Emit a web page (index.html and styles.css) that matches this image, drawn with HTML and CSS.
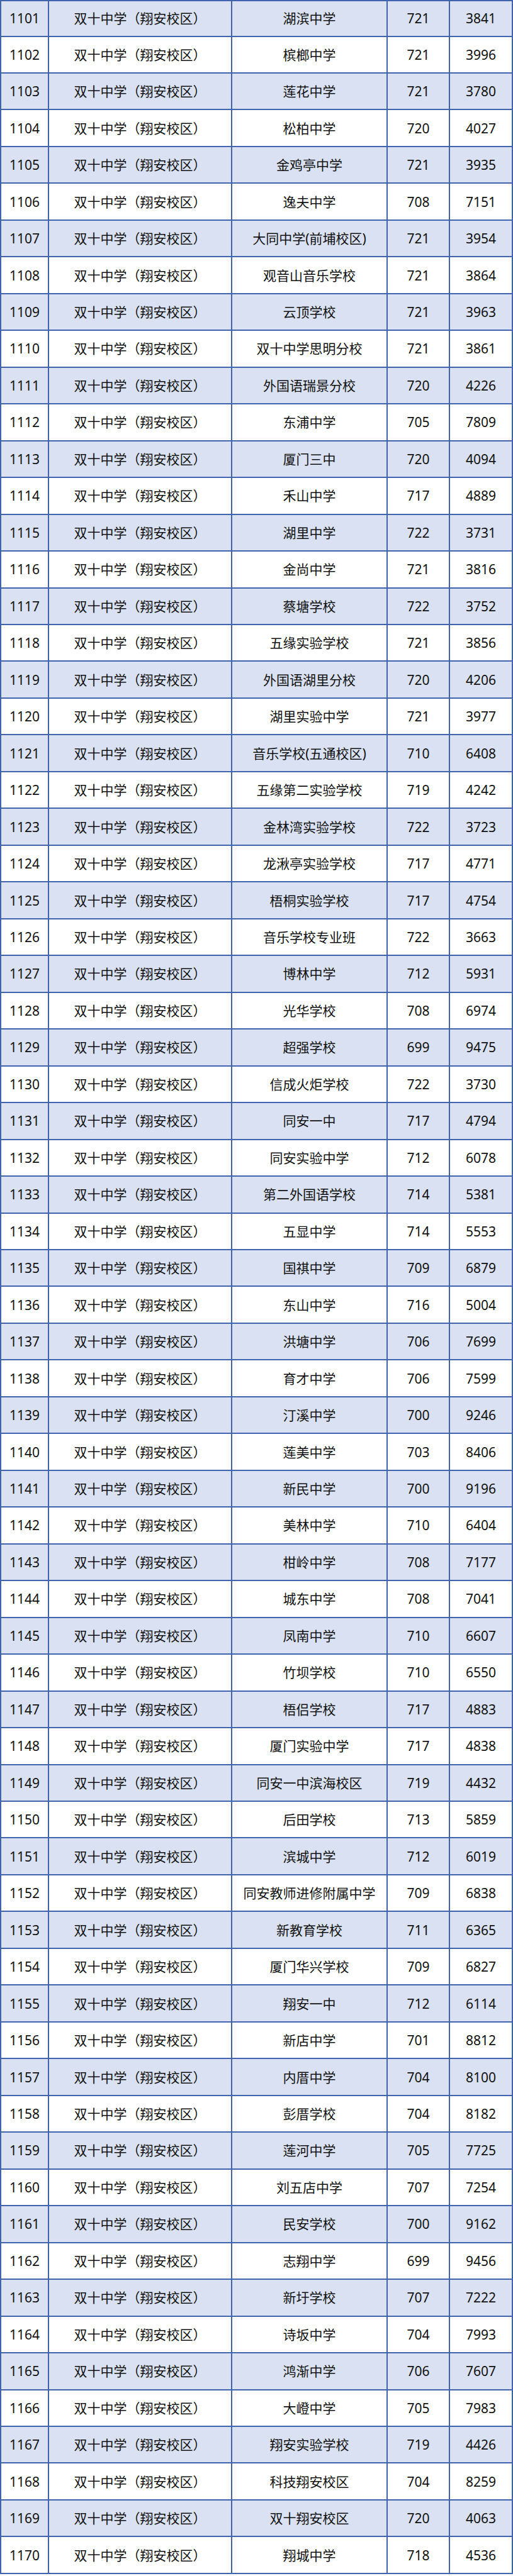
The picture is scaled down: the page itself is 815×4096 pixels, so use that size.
FILE: index.html
```html
<!DOCTYPE html>
<html lang="zh-CN">
<head>
<meta charset="utf-8">
<title>双十中学（翔安校区）</title>
<link rel="stylesheet" href="styles.css">
</head>
<body>
<div class="sheet">
<div class="row alt"><div class="c">1101</div><div class="c">双十中学（翔安校区）</div><div class="c">湖滨中学</div><div class="c">721</div><div class="c">3841</div></div>
<div class="row"><div class="c">1102</div><div class="c">双十中学（翔安校区）</div><div class="c">槟榔中学</div><div class="c">721</div><div class="c">3996</div></div>
<div class="row alt"><div class="c">1103</div><div class="c">双十中学（翔安校区）</div><div class="c">莲花中学</div><div class="c">721</div><div class="c">3780</div></div>
<div class="row"><div class="c">1104</div><div class="c">双十中学（翔安校区）</div><div class="c">松柏中学</div><div class="c">720</div><div class="c">4027</div></div>
<div class="row alt"><div class="c">1105</div><div class="c">双十中学（翔安校区）</div><div class="c">金鸡亭中学</div><div class="c">721</div><div class="c">3935</div></div>
<div class="row"><div class="c">1106</div><div class="c">双十中学（翔安校区）</div><div class="c">逸夫中学</div><div class="c">708</div><div class="c">7151</div></div>
<div class="row alt"><div class="c">1107</div><div class="c">双十中学（翔安校区）</div><div class="c">大同中学(前埔校区)</div><div class="c">721</div><div class="c">3954</div></div>
<div class="row"><div class="c">1108</div><div class="c">双十中学（翔安校区）</div><div class="c">观音山音乐学校</div><div class="c">721</div><div class="c">3864</div></div>
<div class="row alt"><div class="c">1109</div><div class="c">双十中学（翔安校区）</div><div class="c">云顶学校</div><div class="c">721</div><div class="c">3963</div></div>
<div class="row"><div class="c">1110</div><div class="c">双十中学（翔安校区）</div><div class="c">双十中学思明分校</div><div class="c">721</div><div class="c">3861</div></div>
<div class="row alt"><div class="c">1111</div><div class="c">双十中学（翔安校区）</div><div class="c">外国语瑞景分校</div><div class="c">720</div><div class="c">4226</div></div>
<div class="row"><div class="c">1112</div><div class="c">双十中学（翔安校区）</div><div class="c">东浦中学</div><div class="c">705</div><div class="c">7809</div></div>
<div class="row alt"><div class="c">1113</div><div class="c">双十中学（翔安校区）</div><div class="c">厦门三中</div><div class="c">720</div><div class="c">4094</div></div>
<div class="row"><div class="c">1114</div><div class="c">双十中学（翔安校区）</div><div class="c">禾山中学</div><div class="c">717</div><div class="c">4889</div></div>
<div class="row alt"><div class="c">1115</div><div class="c">双十中学（翔安校区）</div><div class="c">湖里中学</div><div class="c">722</div><div class="c">3731</div></div>
<div class="row"><div class="c">1116</div><div class="c">双十中学（翔安校区）</div><div class="c">金尚中学</div><div class="c">721</div><div class="c">3816</div></div>
<div class="row alt"><div class="c">1117</div><div class="c">双十中学（翔安校区）</div><div class="c">蔡塘学校</div><div class="c">722</div><div class="c">3752</div></div>
<div class="row"><div class="c">1118</div><div class="c">双十中学（翔安校区）</div><div class="c">五缘实验学校</div><div class="c">721</div><div class="c">3856</div></div>
<div class="row alt"><div class="c">1119</div><div class="c">双十中学（翔安校区）</div><div class="c">外国语湖里分校</div><div class="c">720</div><div class="c">4206</div></div>
<div class="row"><div class="c">1120</div><div class="c">双十中学（翔安校区）</div><div class="c">湖里实验中学</div><div class="c">721</div><div class="c">3977</div></div>
<div class="row alt"><div class="c">1121</div><div class="c">双十中学（翔安校区）</div><div class="c">音乐学校(五通校区)</div><div class="c">710</div><div class="c">6408</div></div>
<div class="row"><div class="c">1122</div><div class="c">双十中学（翔安校区）</div><div class="c">五缘第二实验学校</div><div class="c">719</div><div class="c">4242</div></div>
<div class="row alt"><div class="c">1123</div><div class="c">双十中学（翔安校区）</div><div class="c">金林湾实验学校</div><div class="c">722</div><div class="c">3723</div></div>
<div class="row"><div class="c">1124</div><div class="c">双十中学（翔安校区）</div><div class="c">龙湫亭实验学校</div><div class="c">717</div><div class="c">4771</div></div>
<div class="row alt"><div class="c">1125</div><div class="c">双十中学（翔安校区）</div><div class="c">梧桐实验学校</div><div class="c">717</div><div class="c">4754</div></div>
<div class="row"><div class="c">1126</div><div class="c">双十中学（翔安校区）</div><div class="c">音乐学校专业班</div><div class="c">722</div><div class="c">3663</div></div>
<div class="row alt"><div class="c">1127</div><div class="c">双十中学（翔安校区）</div><div class="c">博林中学</div><div class="c">712</div><div class="c">5931</div></div>
<div class="row"><div class="c">1128</div><div class="c">双十中学（翔安校区）</div><div class="c">光华学校</div><div class="c">708</div><div class="c">6974</div></div>
<div class="row alt"><div class="c">1129</div><div class="c">双十中学（翔安校区）</div><div class="c">超强学校</div><div class="c">699</div><div class="c">9475</div></div>
<div class="row"><div class="c">1130</div><div class="c">双十中学（翔安校区）</div><div class="c">信成火炬学校</div><div class="c">722</div><div class="c">3730</div></div>
<div class="row alt"><div class="c">1131</div><div class="c">双十中学（翔安校区）</div><div class="c">同安一中</div><div class="c">717</div><div class="c">4794</div></div>
<div class="row"><div class="c">1132</div><div class="c">双十中学（翔安校区）</div><div class="c">同安实验中学</div><div class="c">712</div><div class="c">6078</div></div>
<div class="row alt"><div class="c">1133</div><div class="c">双十中学（翔安校区）</div><div class="c">第二外国语学校</div><div class="c">714</div><div class="c">5381</div></div>
<div class="row"><div class="c">1134</div><div class="c">双十中学（翔安校区）</div><div class="c">五显中学</div><div class="c">714</div><div class="c">5553</div></div>
<div class="row alt"><div class="c">1135</div><div class="c">双十中学（翔安校区）</div><div class="c">国祺中学</div><div class="c">709</div><div class="c">6879</div></div>
<div class="row"><div class="c">1136</div><div class="c">双十中学（翔安校区）</div><div class="c">东山中学</div><div class="c">716</div><div class="c">5004</div></div>
<div class="row alt"><div class="c">1137</div><div class="c">双十中学（翔安校区）</div><div class="c">洪塘中学</div><div class="c">706</div><div class="c">7699</div></div>
<div class="row"><div class="c">1138</div><div class="c">双十中学（翔安校区）</div><div class="c">育才中学</div><div class="c">706</div><div class="c">7599</div></div>
<div class="row alt"><div class="c">1139</div><div class="c">双十中学（翔安校区）</div><div class="c">汀溪中学</div><div class="c">700</div><div class="c">9246</div></div>
<div class="row"><div class="c">1140</div><div class="c">双十中学（翔安校区）</div><div class="c">莲美中学</div><div class="c">703</div><div class="c">8406</div></div>
<div class="row alt"><div class="c">1141</div><div class="c">双十中学（翔安校区）</div><div class="c">新民中学</div><div class="c">700</div><div class="c">9196</div></div>
<div class="row"><div class="c">1142</div><div class="c">双十中学（翔安校区）</div><div class="c">美林中学</div><div class="c">710</div><div class="c">6404</div></div>
<div class="row alt"><div class="c">1143</div><div class="c">双十中学（翔安校区）</div><div class="c">柑岭中学</div><div class="c">708</div><div class="c">7177</div></div>
<div class="row"><div class="c">1144</div><div class="c">双十中学（翔安校区）</div><div class="c">城东中学</div><div class="c">708</div><div class="c">7041</div></div>
<div class="row alt"><div class="c">1145</div><div class="c">双十中学（翔安校区）</div><div class="c">凤南中学</div><div class="c">710</div><div class="c">6607</div></div>
<div class="row"><div class="c">1146</div><div class="c">双十中学（翔安校区）</div><div class="c">竹坝学校</div><div class="c">710</div><div class="c">6550</div></div>
<div class="row alt"><div class="c">1147</div><div class="c">双十中学（翔安校区）</div><div class="c">梧侣学校</div><div class="c">717</div><div class="c">4883</div></div>
<div class="row"><div class="c">1148</div><div class="c">双十中学（翔安校区）</div><div class="c">厦门实验中学</div><div class="c">717</div><div class="c">4838</div></div>
<div class="row alt"><div class="c">1149</div><div class="c">双十中学（翔安校区）</div><div class="c">同安一中滨海校区</div><div class="c">719</div><div class="c">4432</div></div>
<div class="row"><div class="c">1150</div><div class="c">双十中学（翔安校区）</div><div class="c">后田学校</div><div class="c">713</div><div class="c">5859</div></div>
<div class="row alt"><div class="c">1151</div><div class="c">双十中学（翔安校区）</div><div class="c">滨城中学</div><div class="c">712</div><div class="c">6019</div></div>
<div class="row"><div class="c">1152</div><div class="c">双十中学（翔安校区）</div><div class="c">同安教师进修附属中学</div><div class="c">709</div><div class="c">6838</div></div>
<div class="row alt"><div class="c">1153</div><div class="c">双十中学（翔安校区）</div><div class="c">新教育学校</div><div class="c">711</div><div class="c">6365</div></div>
<div class="row"><div class="c">1154</div><div class="c">双十中学（翔安校区）</div><div class="c">厦门华兴学校</div><div class="c">709</div><div class="c">6827</div></div>
<div class="row alt"><div class="c">1155</div><div class="c">双十中学（翔安校区）</div><div class="c">翔安一中</div><div class="c">712</div><div class="c">6114</div></div>
<div class="row"><div class="c">1156</div><div class="c">双十中学（翔安校区）</div><div class="c">新店中学</div><div class="c">701</div><div class="c">8812</div></div>
<div class="row alt"><div class="c">1157</div><div class="c">双十中学（翔安校区）</div><div class="c">内厝中学</div><div class="c">704</div><div class="c">8100</div></div>
<div class="row"><div class="c">1158</div><div class="c">双十中学（翔安校区）</div><div class="c">彭厝学校</div><div class="c">704</div><div class="c">8182</div></div>
<div class="row alt"><div class="c">1159</div><div class="c">双十中学（翔安校区）</div><div class="c">莲河中学</div><div class="c">705</div><div class="c">7725</div></div>
<div class="row"><div class="c">1160</div><div class="c">双十中学（翔安校区）</div><div class="c">刘五店中学</div><div class="c">707</div><div class="c">7254</div></div>
<div class="row alt"><div class="c">1161</div><div class="c">双十中学（翔安校区）</div><div class="c">民安学校</div><div class="c">700</div><div class="c">9162</div></div>
<div class="row"><div class="c">1162</div><div class="c">双十中学（翔安校区）</div><div class="c">志翔中学</div><div class="c">699</div><div class="c">9456</div></div>
<div class="row alt"><div class="c">1163</div><div class="c">双十中学（翔安校区）</div><div class="c">新圩学校</div><div class="c">707</div><div class="c">7222</div></div>
<div class="row"><div class="c">1164</div><div class="c">双十中学（翔安校区）</div><div class="c">诗坂中学</div><div class="c">704</div><div class="c">7993</div></div>
<div class="row alt"><div class="c">1165</div><div class="c">双十中学（翔安校区）</div><div class="c">鸿渐中学</div><div class="c">706</div><div class="c">7607</div></div>
<div class="row"><div class="c">1166</div><div class="c">双十中学（翔安校区）</div><div class="c">大嶝中学</div><div class="c">705</div><div class="c">7983</div></div>
<div class="row alt"><div class="c">1167</div><div class="c">双十中学（翔安校区）</div><div class="c">翔安实验学校</div><div class="c">719</div><div class="c">4426</div></div>
<div class="row"><div class="c">1168</div><div class="c">双十中学（翔安校区）</div><div class="c">科技翔安校区</div><div class="c">704</div><div class="c">8259</div></div>
<div class="row alt"><div class="c">1169</div><div class="c">双十中学（翔安校区）</div><div class="c">双十翔安校区</div><div class="c">720</div><div class="c">4063</div></div>
<div class="row"><div class="c">1170</div><div class="c">双十中学（翔安校区）</div><div class="c">翔城中学</div><div class="c">718</div><div class="c">4536</div></div>
</div>
</body>
</html>
```

FILE: styles.css
```css
html, body {
  margin: 0;
  padding: 0;
  background: #ffffff;
}

.sheet {
  width: 815px;
  box-sizing: border-box;
  border-top: 2px solid #3f63ad;
  border-left: 2px solid #3f63ad;
  font-family: "Noto Sans", "Noto Sans CJK SC", sans-serif;
  font-size: 21px;
  color: #111111;
}

.row {
  display: grid;
  grid-template-columns: 76px 291px 247px 99px 100px;
  height: 58.47px;
  box-sizing: border-box;
  background: #ffffff;
}

.row:first-child {
  height: 56.5px;
}

.row.alt {
  background: #d9e1f2;
}

.c {
  display: flex;
  align-items: center;
  justify-content: center;
  box-sizing: border-box;
  border-right: 2px solid #3f63ad;
  border-bottom: 2px solid #3f63ad;
  white-space: nowrap;
  line-height: 1;
  padding-top: 1px;
}
```
